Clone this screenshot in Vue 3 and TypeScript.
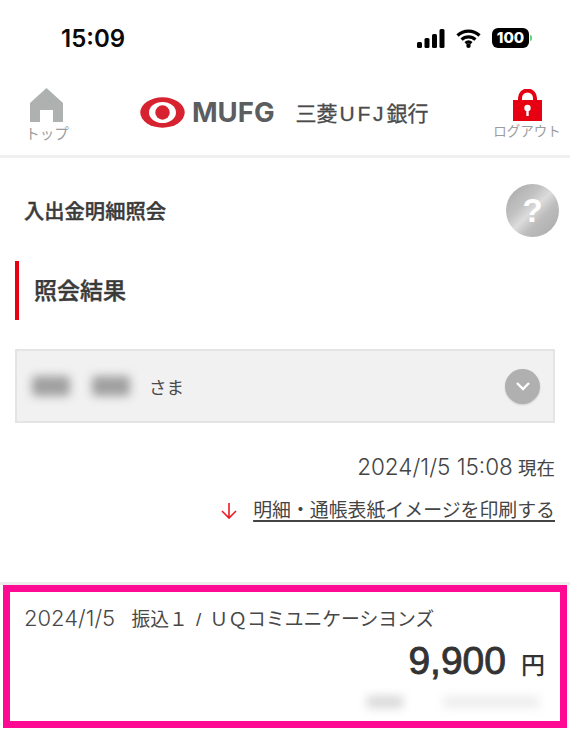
<template>
  <div class="page">
    <!-- iOS status bar -->
    <div class="status">
      <span class="time">15:09</span>
      <div class="status-icons">
        <svg width="28" height="19" viewBox="0 0 28 19">
          <rect x="0" y="13" width="5" height="6" rx="1.5" />
          <rect x="7.500" y="9" width="5" height="10" rx="1.5" />
          <rect x="15" y="5" width="5" height="14" rx="1.5" />
          <rect x="22.500" y="0" width="5" height="19" rx="1.5" />
        </svg>
        <svg class="wifi" width="25" height="19" viewBox="0 0 25 19">
          <path d="M1.500 6.500a16 16 0 0 1 22 0" />
          <path d="M5.600 10.600a10 10 0 0 1 13.800 0" />
          <path d="M9.500 14.200a4.600 4.600 0 0 1 6 0" />
          <circle cx="12.500" cy="16.700" r="2.200" />
        </svg>
        <div class="battery">
          <span class="battery-body">100</span>
          <span class="battery-tip"></span>
        </div>
      </div>
    </div>

    <!-- App header -->
    <header class="header">
      <a class="nav-item">
        <svg width="34" height="34" viewBox="0 0 34 34">
          <path d="M16.500 0 33 15V34H23V22H10V34H0V15Z" fill="#adb1af" />
        </svg>
        <span>トップ</span>
      </a>
      <div class="logo">
        <svg width="45" height="31" viewBox="0 0 45 31">
          <ellipse cx="22.500" cy="15.500" rx="22.200" ry="15.200" fill="#d7232f" />
          <ellipse cx="22.500" cy="15.500" rx="13.500" ry="10.500" fill="#fff" />
          <circle cx="22.500" cy="15.500" r="7.200" fill="#d7232f" />
        </svg>
        <span class="logo-mufg">MUFG</span>
        <span class="logo-bank">三菱<span class="logo-ufj">UFJ</span>銀行</span>
      </div>
      <a class="nav-item nav-item--logout">
        <svg width="31" height="32" viewBox="0 0 31 32">
          <path d="M8 12V9a7.500 7.500 0 0 1 15 0v3" fill="none" stroke="#e60012" stroke-width="4" />
          <rect x="1" y="11" width="29" height="21" fill="#e60012" />
          <circle cx="15.500" cy="19" r="3.200" fill="#fff" />
          <rect x="14.300" y="20" width="2.400" height="7" fill="#fff" />
        </svg>
        <span>ログアウト</span>
      </a>
    </header>

    <main>
      <div class="title-row">
        <h1>入出金明細照会</h1>
        <div class="help">?</div>
      </div>

      <h2 class="section-title">照会結果</h2>

      <div class="account">
        <span class="blur-name"></span>
        <span class="blur-name"></span>
        <span class="account-suffix">さま</span>
        <span class="chevron">
          <svg width="18" height="12" viewBox="0 0 18 12">
            <path d="M3 3l6 6 6-6" fill="none" stroke="#fff" stroke-width="2.400" />
          </svg>
        </span>
      </div>

      <p class="as-of"><span class="num">2024/1/5 15:08</span> 現在</p>

      <div class="print-row">
        <svg width="18" height="18" viewBox="0 0 18 18">
          <path d="M9 1v15M2 9l7 7 7-7" fill="none" stroke="#ee1c25" stroke-width="1.600" />
        </svg>
        <a class="print-link">明細・通帳表紙イメージを印刷する</a>
      </div>

      <section class="record-wrap">
        <div class="record">
          <p class="record-line"><span class="num">2024/1/5</span>&nbsp; 振込１ / ＵＱコミユニケーシヨンズ</p>
          <p class="amount"><b>9,900</b><span>円</span></p>
          <div class="record-note">
            <span class="note-a"></span>
            <span class="note-b"></span>
          </div>
        </div>
      </section>
    </main>
  </div>
</template>

<script setup lang="ts">
</script>

<style>
html, body { margin: 0; background: #fff; }
</style>

<style scoped>
.page {
  width: 570px;
  height: 735px;
  overflow: hidden;
  background: #fff;
  color: #3a3a3a;
  font-family: "Liberation Sans", "Noto Sans CJK JP", sans-serif;
}
.num { font-family: Inter, sans-serif; }

.status {
  height: 70px;
  box-sizing: border-box;
  padding: 22px 38px 0 61px;
  display: flex;
  justify-content: space-between;
  align-items: flex-start;
}
.time {
  font-family: Inter, sans-serif;
  font-size: 24px;
  font-weight: 600;
  line-height: 33px;
  color: #0a0a0a;
}
.status-icons {
  display: flex;
  align-items: center;
  gap: 11px;
  height: 32px;
}
.status-icons svg { fill: #000; }
.wifi path { fill: none; stroke: #000; stroke-width: 3.200; }
.battery { display: flex; align-items: center; gap: 1px; }
.battery-body {
  width: 37px;
  height: 20px;
  background: #000;
  border-radius: 6px;
  color: #fff;
  font-family: Inter, sans-serif;
  font-size: 15px;
  font-weight: 800;
  line-height: 20px;
  text-align: center;
}
.battery-tip {
  width: 2px;
  height: 6px;
  background: #5fd57a;
  border-radius: 0 2px 2px 0;
}

.header {
  height: 85px;
  display: grid;
  grid-template-columns: 94px 1fr 86px;
  border-bottom: 3px solid #f0f0f0;
}
.nav-item {
  display: flex;
  flex-direction: column;
  align-items: center;
  padding-top: 18px;
  color: #9c9c9c;
  font-size: 14.500px;
  line-height: 16px;
  white-space: nowrap;
}
.nav-item svg { margin-bottom: 4px; }
.nav-item--logout { padding-top: 19px; font-size: 13.500px; }
.nav-item--logout svg { margin-bottom: 3px; }
.logo {
  display: flex;
  align-items: center;
  padding-left: 46px;
  margin-top: -1px;
}
.logo-mufg {
  font-family: Inter, sans-serif;
  font-weight: 700;
  font-size: 27.500px;
  color: #5b5d5f;
  margin-left: 7px;
}
.logo-bank {
  margin-left: 21px;
  font-size: 21px;
  color: #4a4a4a;
  white-space: nowrap;
  -webkit-text-stroke: 0.3px #4a4a4a;
}
.logo-ufj { letter-spacing: 2.800px; margin-left: 2px; }

.title-row {
  height: 104px;
  box-sizing: border-box;
  padding: 0 11px 0 24px;
  display: flex;
  justify-content: space-between;
  align-items: center;
}
h1 {
  margin: 0;
  font-size: 20.300px;
  font-weight: 500;
  color: #3a3a3a;
  -webkit-text-stroke: 0.4px #3a3a3a;
}
.help {
  width: 53px;
  height: 53px;
  border-radius: 50%;
  background: linear-gradient(135deg, #a6a6a6 0%, #c2c2c2 35%, #dcdcdc 50%, #bdbdbd 65%, #a8a8a8 100%);
  color: #fff;
  font-size: 33px;
  font-weight: 700;
  line-height: 53px;
  text-align: center;
}

.section-title {
  margin: -1px 0 0 15px;
  height: 59px;
  box-sizing: border-box;
  border-left: 4px solid #e60012;
  padding-left: 15px;
  font-size: 23px;
  font-weight: 500;
  line-height: 61px;
  color: #3a3a3a;
  -webkit-text-stroke: 0.4px #3a3a3a;
}

.account {
  margin: 29px 15px 0;
  height: 74px;
  box-sizing: border-box;
  border: 2px solid #e4e4e4;
  background: #f1f1f1;
  display: flex;
  align-items: center;
  padding: 0 13px 0 15px;
}
.blur-name {
  width: 38px;
  height: 20px;
  margin-right: 22px;
  background: #a0a0a0;
  border-radius: 4px;
  filter: blur(5px);
}
.account-suffix {
  margin-left: -3px;
  font-size: 17.500px;
  color: #4a4a4a;
}
.chevron {
  margin-left: auto;
  width: 35px;
  height: 35px;
  border-radius: 50%;
  background: #b0b0b0;
  box-shadow: 0 1px 2px rgba(0, 0, 0, 0.15);
  display: flex;
  align-items: center;
  justify-content: center;
}

.as-of {
  margin: 32px 15px 0 0;
  height: 24px;
  font-size: 18.500px;
  line-height: 24px;
  text-align: right;
  color: #444;
  white-space: nowrap;
}
.as-of .num { font-size: 22.500px; font-weight: 300; }

.print-row {
  margin: 19px 15px 0 0;
  height: 26px;
  display: flex;
  justify-content: flex-end;
  align-items: center;
  gap: 15px;
}
.print-link {
  font-size: 18.900px;
  line-height: 26px;
  white-space: nowrap;
  color: #444;
  text-decoration: underline;
  text-decoration-thickness: 1.500px;
  text-underline-offset: 3px;
}

.record-wrap {
  margin-top: 58px;
  border-top: 3px solid #ececec;
}
.record {
  margin: 0 3px;
  height: 143px;
  box-sizing: border-box;
  border: 7px solid #ff0a93;
  padding: 14px 15px 0 14px;
}
.record-line {
  margin: 0;
  font-size: 18.800px;
  line-height: 24px;
  color: #484848;
  white-space: nowrap;
  word-spacing: 3px;
}
.record-line .num { font-size: 22px; font-weight: 300; }
.amount {
  margin: 4px 0 0;
  height: 50px;
  display: flex;
  justify-content: flex-end;
  align-items: baseline;
  gap: 15px;
  color: #333;
}
.amount b { font-size: 39px; line-height: 50px; font-weight: 400; -webkit-text-stroke: 0.9px #333; }
.amount span { font-size: 24px; font-weight: 500; }
.record-note {
  margin-top: 10px;
  height: 14px;
  display: flex;
  justify-content: flex-end;
  gap: 40px;
  padding-right: 6px;
}
.note-a, .note-b { height: 12px; filter: blur(5px); }
.note-a { width: 36px; background: #d8d8d8; }
.note-b { width: 96px; background: #eeeeee; }
</style>
